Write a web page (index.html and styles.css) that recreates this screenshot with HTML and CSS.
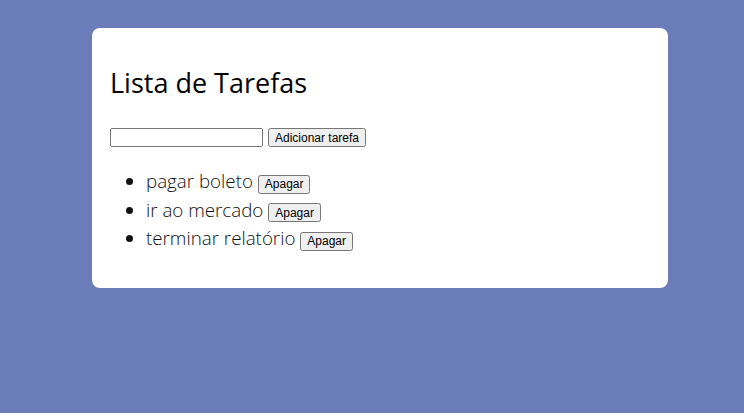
FILE: index.html
```html
<!DOCTYPE html>
<html lang="pt-BR">
<head>
<meta charset="utf-8">
<title>Lista de Tarefas</title>
<link rel="stylesheet" href="styles.css">
</head>
<body>
<div class="card">
  <h1 class="title">Lista de Tarefas</h1>
  <div class="form">
    <input type="text" class="task-input">
    <button class="btn">Adicionar tarefa</button>
  </div>
  <ul class="list">
    <li class="item">pagar boleto <button class="btn">Apagar</button></li>
    <li class="item">ir ao mercado <button class="btn">Apagar</button></li>
    <li class="item">terminar relatório <button class="btn">Apagar</button></li>
  </ul>
</div>
</body>
</html>
```
FILE: styles.css
```css
html, body {
  margin: 0;
  padding: 0;
}
body {
  background: #6a7db8;
  font-family: "Open Sans", sans-serif;
  padding: 28px 0 0 16px;
}
.card {
  background: #fff;
  width: 540px;
  margin: 0 auto;
  border-radius: 8px;
  padding: 18px 18px 35px;
}
.title {
  font-weight: 400;
  font-size: 27px;
  margin: 18px 0 27px;
  color: #000;
}
.form {
  display: flex;
  gap: 5px;
  align-items: center;
  margin-bottom: 20px;
}
.task-input {
  box-sizing: border-box;
  width: 153px;
  height: 19px;
  margin: 0;
  font-family: "Liberation Sans", Arial, sans-serif;
  font-size: 12px;
}
.btn {
  box-sizing: border-box;
  height: 19px;
  margin: 0;
  padding: 0 5px;
  font-family: "Liberation Sans", Arial, sans-serif;
  font-size: 12px;
}
.list {
  margin: 0;
  padding-left: 36px;
}
.item {
  font-weight: 300;
  font-size: 18.75px;
  color: #111;
  line-height: 28.5px;
}
```
